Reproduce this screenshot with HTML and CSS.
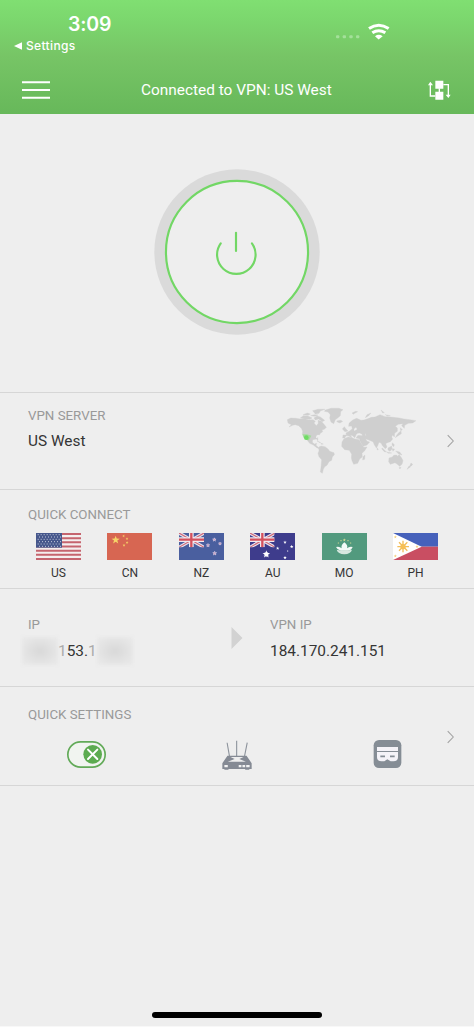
FILE: index.html
```html
<!DOCTYPE html>
<html lang="en">
<head>
<meta charset="utf-8">
<title>VPN</title>
<link rel="stylesheet" href="styles.css">
</head>
<body>
<svg class="defs" width="0" height="0">
  <defs>
    <polygon id="star" points="0,-1 .24,-.33 .95,-.31 .38,.12 .59,.81 0,.4 -.59,.81 -.38,.12 -.95,-.31 -.24,-.33"/>
    <g id="jack">
      <path d="M0 0L75 43M75 0L0 43" stroke="#e9e3ee" stroke-width="10"/>
      <path d="M0 0L75 43M75 0L0 43" stroke="#cf6a78" stroke-width="3.5"/>
      <path d="M37 0V43M0 20H75" stroke="#f1eaf0" stroke-width="14"/>
      <path d="M37 0V43M0 20H75" stroke="#d4515d" stroke-width="7"/>
    </g>
  </defs>
</svg>
<header class="header">
  <div class="status">
    <div class="clock">3:09</div>
    <div class="signal">
      <svg class="dots" viewBox="0 0 72 12"><g fill="#a4e09a"><rect x="0" y="1" width="10" height="9" rx="3"/><rect x="20" y="1" width="10" height="9" rx="3"/><rect x="40" y="1" width="10" height="9" rx="3"/><rect x="60" y="1" width="10" height="9" rx="3"/></g></svg>
      <svg class="wifi" viewBox="395 70 66 50"><g fill="none" stroke="#fff" stroke-width="9"><path d="M398 86Q427 66 457 86"/><path d="M408 99Q427 86 447 99"/></g><path d="M416 109Q427 101 439 109L427 119Z" fill="#fff"/></svg>
    </div>
  </div>
  <div class="back"><svg viewBox="0 0 24 24"><path d="M0 12L24 1V23Z" fill="#fff"/></svg><span>Settings</span></div>
  <nav class="bar">
    <svg class="menu" viewBox="0 0 84 54"><path d="M0 4H84M0 27H84M0 50H84" stroke="#fff" stroke-width="6"/></svg>
    <h1 class="title">Connected to VPN: US West</h1>
    <svg class="swap" viewBox="573 239 69 60"><path d="M595 241H619V265H595ZM595 274H619V298H595Z" fill="#fff"/><path d="M595 287H580V252M619 253H634V286M607 264V276" fill="none" stroke="#fff" stroke-width="4"/><path d="M573 255L580 244L588 255ZM626 283H641L634 293Z" fill="#fff"/></svg>
  </nav>
</header>
<main>
  <section class="power">
    <svg viewBox="0 0 500 500"><circle cx="250" cy="250" r="249" fill="#dadada"/><circle cx="250" cy="250" r="214" fill="#eee" stroke="#72d765" stroke-width="6.5"/><g fill="none" stroke="#72d765" stroke-width="6.5" stroke-linecap="round"><path d="M247 192V247"/><path d="M201 224A58 58 0 1 0 295 224"/></g></svg>
  </section>
  <section class="server">
    <div class="field"><h2>VPN SERVER</h2><p>US West</p></div>
    <svg class="map" viewBox="45 62 402 210">
      <g fill="#cfcfcf" stroke="#cfcfcf" stroke-width="1" stroke-linejoin="round">
        <path d="M52 103L62 98L77 99L91 101L104 100L116 104L129 103L136 108L132 113L139 121L145 114L144 105L154 108L162 117L169 126L163 132L156 134L158 139L151 144L147 151L143 157L144 166L139 161L128 163L127 171L133 176L140 174L138 180L143 184L148 190L140 187L130 179L119 174L112 165L106 160L101 153L97 145L98 138L94 129L86 121L76 118L68 120L57 125L64 118L54 113Z"/>
        <path d="M91 98L100 91L114 92L126 98L119 102L105 101ZM99 88L112 83L121 86L114 90ZM132 98L141 92L151 95L164 105L157 109L146 101L136 104ZM128 76L144 72L165 72L151 77L147 84L136 86ZM122 91L133 88L144 89L135 93Z"/>
        <path d="M166 74L183 69L207 69L219 73L212 79L211 91L203 98L196 103L191 115L183 110L179 98L181 88L174 80L163 78Z"/>
        <path d="M200 107L212 105L218 108L210 113L203 111ZM246 83L257 78L263 79L254 84L250 87ZM141 167L151 171L151 173ZM153 174L160 176L154 177Z"/>
        <path d="M146 185L154 182L165 184L174 191L179 198L192 202L193 208L187 215L185 225L177 229L171 240L164 244L160 252L157 264L151 260L153 246L155 223L147 214L144 204L147 197Z"/>
        <path d="M217 131L223 124L228 131L234 137L225 139ZM218 158L219 149L229 149L228 143L239 137L247 130L245 122L236 123L237 114L248 104L260 99L273 105L282 104L297 99L304 96L315 95L330 88L346 94L354 94L369 96L388 98L402 101L420 103L438 106L428 113L415 114L404 120L403 129L395 121L399 115L385 117L376 123L382 128L382 138L374 144L373 155L368 149L365 155L368 161L361 169L352 172L347 175L351 185L346 190L338 182L333 173L327 171L323 181L319 188L313 178L309 169L296 164L287 160L291 168L299 170L291 179L279 183L269 165L269 160L258 158L264 150L277 151L276 146L263 144L258 150L254 157L248 151L241 149L246 157L235 151L228 151L224 158Z"/>
        <path d="M222 160L235 155L246 157L255 161L267 163L274 175L281 186L291 185L284 196L276 204L277 215L269 221L263 234L251 237L246 226L244 217L245 207L238 195L224 193L215 183L216 170Z"/>
        <path d="M285 209L284 222L278 224L279 214ZM321 187L325 193L321 193ZM337 188L349 200L343 199L335 190ZM350 200L365 203L355 204ZM354 188L365 182L366 191L360 198L354 194ZM366 190L374 191L369 198ZM377 197L389 200L396 209L386 206ZM367 172L373 178L371 184L366 179ZM386 142L393 137L394 145L382 153L376 157L380 150ZM391 127L397 133L392 136ZM286 97L291 88L303 83L296 91ZM333 74L343 82L338 83ZM346 88L361 91L352 92Z"/>
        <path d="M357 218L367 215L371 210L380 209L381 213L388 208L395 218L399 226L396 237L389 243L382 237L375 232L361 237L356 229ZM387 247L393 246L390 251ZM423 233L428 237L425 241L419 243ZM417 242L422 244L411 252Z"/>
      </g>
      <path d="M138 159L147 155L153 151L144 148L139 151ZM253 137L261 132L258 126L252 131ZM258 147L268 144L275 147L264 150ZM285 143L289 153L286 149Z" fill="#eee"/>
      <path d="M97 147L111 147L124 151L117 165L109 163L101 157Z" fill="#a4dd9c"/><circle cx="109" cy="157" r="7" fill="#70db65"/>
    </svg>
    <svg class="chevron" viewBox="0 0 20 40"><path d="M2 3L18 20L2 37" fill="none" stroke="#a2a2a2" stroke-width="3"/></svg>
  </section>
  <section class="connect">
    <h2>QUICK CONNECT</h2>
    <div class="flags">
      <div class="country"><svg viewBox="0 0 135 81"><rect width="135" height="81" fill="#f4eeee"/><path d="M0 3H135M0 15.5H135M0 28H135M0 40.5H135M0 53H135M0 65.5H135M0 78H135" stroke="#c5646e" stroke-width="6.2"/><rect width="78" height="44" fill="#46578c"/><path d="M5 5H76M9 12H76M5 19H76M9 26H76M5 33H76M9 40H76" stroke="#c4cadb" stroke-width="3" stroke-dasharray="3 6"/></svg><span>US</span></div>
      <div class="country"><svg viewBox="0 0 135 81"><rect width="135" height="81" fill="#d76652"/><g fill="#f6d467"><use href="#star" transform="translate(26 21) scale(13)"/><use href="#star" transform="translate(50 9) rotate(20) scale(4.5)"/><use href="#star" transform="translate(60 17) scale(4.5)"/><use href="#star" transform="translate(60 29) rotate(20) scale(4.5)"/><use href="#star" transform="translate(51 37) scale(4.5)"/></g></svg><span>CN</span></div>
      <div class="country"><svg viewBox="0 0 135 81"><rect width="135" height="81" fill="#4a5f9f"/><svg width="75" height="43"><use href="#jack"/></svg><g fill="#cc91b4" stroke="#e4d8ed" stroke-width=".3"><use href="#star" transform="translate(106 20) scale(5.5)"/><use href="#star" transform="translate(87 37) scale(5.5)"/><use href="#star" transform="translate(123 32) scale(5)"/><use href="#star" transform="translate(107 61) scale(6)"/></g></svg><span>NZ</span></div>
      <div class="country"><svg viewBox="0 0 135 81"><rect width="135" height="81" fill="#3e3c8c"/><svg width="73" height="43"><use href="#jack"/></svg><g fill="#fff"><use href="#star" transform="translate(49 64) scale(12)"/><use href="#star" transform="translate(49 64) rotate(36) scale(9)"/><use href="#star" transform="translate(105 28) scale(5.5)"/><use href="#star" transform="translate(83 46) scale(5.5)"/><use href="#star" transform="translate(125 41) scale(5.5)"/><use href="#star" transform="translate(105 74) scale(5.5)"/><use href="#star" transform="translate(113 54) scale(3)"/></g></svg><span>AU</span></div>
      <div class="country"><svg viewBox="0 0 135 81"><rect width="135" height="81" fill="#529a7e"/><path d="M42 42Q52 39 59 46Q56 37 67 28Q79 37 75 46Q82 39 92 42Q89 51 78 53H56Q46 51 42 42Z" fill="#f5faf7"/><path d="M44 50Q67 56 90 50Q86 63 67 64Q48 63 44 50Z" fill="#d6e8df"/><g fill="#d8dc93"><use href="#star" transform="translate(67 21) scale(5)"/><use href="#star" transform="translate(57 23) scale(3)"/><use href="#star" transform="translate(78 23) scale(3)"/><use href="#star" transform="translate(49 30) scale(3)"/><use href="#star" transform="translate(86 30) scale(3)"/></g></svg><span>MO</span></div>
      <div class="country"><svg viewBox="0 0 135 81"><rect width="135" height="41" fill="#4661bb"/><rect y="41" width="135" height="40" fill="#c94e62"/><path d="M0 0L86 41L0 81Z" fill="#fff"/><g stroke="#f3bd58" stroke-width="4"><path d="M30 23V58M13 41H48M18 28L43 53M43 28L18 53"/></g><circle cx="30" cy="41" r="8" fill="#f5bf56"/><g fill="#f5cf7c"><use href="#star" transform="translate(7 12) scale(5)"/><use href="#star" transform="translate(7 69) scale(5)"/><use href="#star" transform="translate(72 41) scale(5)"/></g></svg><span>PH</span></div>
    </div>
  </section>
  <section class="ips">
    <div class="field"><h2>IP</h2><p class="masked"><span class="smudge left"></span><span class="faint">1</span>53.<span class="faint">1</span><span class="smudge right"></span></p></div>
    <svg class="arrow" viewBox="0 0 11 22"><path d="M0 0L11 11L0 22Z" fill="#d2d2d2"/></svg>
    <div class="field"><h2>VPN IP</h2><p>184.170.241.151</p></div>
  </section>
  <section class="settings">
    <h2>QUICK SETTINGS</h2>
    <div class="tools">
      <svg class="toggle" viewBox="201 137 117 81"><rect x="203.500" y="139.500" width="112" height="76" rx="38" fill="#f1f4f0" stroke="#62aa58" stroke-width="5"/><circle cx="278" cy="177" r="28" fill="#5cab50"/><path d="M264 163L292 191M292 163L264 191" stroke="#fff" stroke-width="6" stroke-linecap="round"/></svg>
      <svg class="router" viewBox="38 133 88 88"><path d="M53 141L60 181M81 135V181M112 141L104 181" stroke="#8c929b" stroke-width="3.200" fill="none"/><path d="M54 179H110L125 201V218H118V220H106V218H57V220H45V218H39V201Z" fill="#858a94"/><path d="M63 183H101L89 189L108 197H55L75 189Z" fill="#eee"/><path d="M45 206H55V213H45ZM87 206H95V213H87ZM98 206H106V213H98ZM109 206H119V213H109Z" fill="#f2f2f2"/></svg>
      <svg class="mask" viewBox="491 135 83 84"><rect x="491" y="135" width="83" height="84" rx="16" fill="#858d95"/><path d="M501 156H564V168H501ZM501 171H564V187Q564 199 550 199H542L532 193L523 199H515Q501 199 501 187Z" fill="#f4f3f8"/><path d="M511 184H525M540 184H554" stroke="#858d95" stroke-width="5" fill="none"/></svg>
    </div>
    <svg class="chevron" viewBox="0 0 20 40"><path d="M2 3L18 20L2 37" fill="none" stroke="#a2a2a2" stroke-width="3"/></svg>
  </section>
</main>
<footer class="home"><div class="handle"></div></footer>
</body>
</html>
```
FILE: styles.css
```css
* { box-sizing: border-box; }
body { margin: 0; height: 1027px; display: flex; flex-direction: column; background: #eee; font-family: Roboto, sans-serif; color: #353535; overflow: hidden; }
h1, h2, p { margin: 0; font-weight: 400; }
svg { display: block; flex: none; }
.defs { position: absolute; }
.header { height: 114px; flex: none; background: linear-gradient(#80df72 0, #7bd66d 22px, #77c566 55px, #67b85a 114px); color: #fff; }
.status { display: flex; justify-content: space-between; height: 37px; padding: 12px 84px 0 68px; }
.clock { font: 600 19.5px/24px Inter, sans-serif; letter-spacing: -.2px; }
.signal { display: flex; gap: 8px; padding-top: 12px; }
.dots { width: 24px; height: 4px; margin-top: 11px; }
.wifi { width: 22px; height: 17px; margin-top: -1px; }
.back { display: flex; align-items: center; gap: 4px; height: 17px; padding-left: 14px; font: 500 12px/17px Inter, sans-serif; letter-spacing: .35px; }
.back svg { width: 8px; height: 8px; }
.bar { display: flex; align-items: center; height: 36px; margin-top: 18px; padding: 0 23px 0 22px; }
.menu { width: 28px; height: 18px; }
.title { flex: 1; padding-left: 91px; font-size: 15.4px; line-height: 20px; white-space: nowrap; }
.swap { width: 23px; height: 20px; }
.power { display: flex; justify-content: center; height: 279px; padding-top: 55px; border-bottom: 1px solid #d6d6d6; }
.power svg { width: 166px; height: 166px; }
h2 { font-size: 13.3px; line-height: 20px; color: #999; }
.field p { font-size: 15.4px; line-height: 20px; }
section { border-bottom: 1px solid #d6d6d6; }
.server { display: flex; height: 97px; padding: 13px 20px 0 28px; }
.server .field { flex: 1; }
.server .field p { margin-top: 5px; }
.map { width: 134px; height: 70px; }
.chevron { width: 7px; height: 14px; }
.server .chevron { margin: 28px 0 0 28px; }
.connect { height: 99px; padding: 15px 0 0 28px; }
.flags { display: flex; gap: 26.4px; margin: 8px 0 0 8px; }
.country { width: 45px; font-size: 12px; line-height: 16px; text-align: center; }
.country > svg { width: 45px; height: 27px; margin-bottom: 5px; }
.ips { display: flex; height: 98px; padding: 26px 28px 0; }
.ips .field:first-child { width: 203px; }
.ips .field p { margin-top: 6px; }
.arrow { width: 12px; height: 22px; margin: 12px 27px 0 0; }
.ips .masked { display: flex; align-items: center; height: 20px; margin-left: -6px; }
.smudge { width: 36px; height: 28px; background: radial-gradient(#d8d8d8, #e5e5e5 65%, #eaeaea); filter: blur(1.5px); }
.faint { color: #aaa; }
.settings { display: grid; grid-template-columns: 1fr 7px; grid-template-rows: 20px 1fr; height: 99px; padding: 18px 20px 0 28px; }
.settings h2 { grid-column: 1 / 3; }
.tools { display: flex; align-items: flex-start; padding: 16px 0 0 39px; }
.toggle { width: 39px; height: 27px; }
.router { width: 30px; height: 30px; margin: -1px 0 0 116px; }
.mask { width: 29px; height: 28px; margin: -1px 0 0 121px; }
.settings .chevron { margin-top: 5px; }
.home { flex: 1; display: flex; flex-direction: column; align-items: center; justify-content: flex-end; padding-bottom: 8px; border-bottom: 1px solid #f8f8f8; }
.handle { width: 170px; height: 6px; border-radius: 3px; background: #000; }
```
